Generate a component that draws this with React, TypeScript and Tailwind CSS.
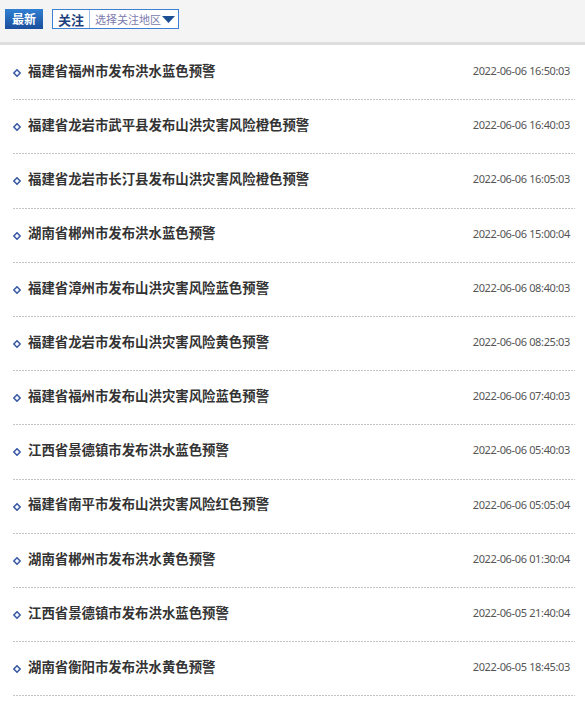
import React from 'react';

const alerts = [
  { title: '福建省福州市发布洪水蓝色预警', time: '2022-06-06 16:50:03' },
  { title: '福建省龙岩市武平县发布山洪灾害风险橙色预警', time: '2022-06-06 16:40:03' },
  { title: '福建省龙岩市长汀县发布山洪灾害风险橙色预警', time: '2022-06-06 16:05:03' },
  { title: '湖南省郴州市发布洪水蓝色预警', time: '2022-06-06 15:00:04' },
  { title: '福建省漳州市发布山洪灾害风险蓝色预警', time: '2022-06-06 08:40:03' },
  { title: '福建省龙岩市发布山洪灾害风险黄色预警', time: '2022-06-06 08:25:03' },
  { title: '福建省福州市发布山洪灾害风险蓝色预警', time: '2022-06-06 07:40:03' },
  { title: '江西省景德镇市发布洪水蓝色预警', time: '2022-06-06 05:40:03' },
  { title: '福建省南平市发布山洪灾害风险红色预警', time: '2022-06-06 05:05:04' },
  { title: '湖南省郴州市发布洪水黄色预警', time: '2022-06-06 01:30:04' },
  { title: '江西省景德镇市发布洪水蓝色预警', time: '2022-06-05 21:40:04' },
  { title: '湖南省衡阳市发布洪水黄色预警', time: '2022-06-05 18:45:03' },
];

function Diamond() {
  return (
    <svg width="8" height="8" viewBox="0 0 8 8" className="shrink-0 mt-[5px]">
      <path d="M4 0.8 L7.2 4 L4 7.2 L0.8 4 Z" fill="white" stroke="#3b5ba6" strokeWidth="1.6" />
    </svg>
  );
}

export default function App() {
  return (
    <div className="w-[585px] min-h-[705px] bg-white font-['Microsoft_YaHei','Noto_Sans_CJK_SC',sans-serif]">
      {/* toolbar */}
      <div className="h-[45px] bg-[#f4f4f4] border-b-[3px] border-[#dedede] flex items-start gap-[9px] pt-[9px] pl-[5px]">
        <button className="w-[38px] h-[20px] flex items-center justify-center bg-gradient-to-b from-[#3180d4] to-[#1b4e9c] text-white text-[12px] font-bold leading-none">
          最新
        </button>
        <div className="flex h-[20px] w-[127px] border border-[#3d80d2] bg-white">
          <div className="w-[37px] flex items-center justify-center border-r border-[#9fbfe6] text-[13px] font-bold text-[#1f3f7c] leading-none">
            关注
          </div>
          <div className="flex-1 flex items-center pl-[5px] text-[11px] text-[#7b79ad] leading-none whitespace-nowrap">
            选择关注地区
            <svg width="13" height="7" viewBox="0 0 13 7" className="ml-[1px] shrink-0">
              <path d="M0 0 H13 L6.5 7 Z" fill="#1c4f93" />
            </svg>
          </div>
        </div>
      </div>

      {/* list */}
      <ul className="ml-[13px] mr-[10px] mt-[1px]">
        {alerts.map((a, i) => (
          <li key={i} className="h-[54.2px] flex flex-col">
            <div className="flex-1 flex items-center pb-[4px] pr-[5px]">
              <Diamond />
              <span className="ml-[7px] text-[13.4px] font-bold text-[#333333] leading-none">{a.title}</span>
              <span className="ml-auto text-[11px] text-[#555555] tracking-[-0.35px] font-['Noto_Sans',sans-serif] leading-none">
                {a.time}
              </span>
            </div>
            <div className="h-px bg-[repeating-linear-gradient(to_right,#c4c4c4_0_2px,transparent_2px_3px)]" />
          </li>
        ))}
      </ul>
    </div>
  );
}
